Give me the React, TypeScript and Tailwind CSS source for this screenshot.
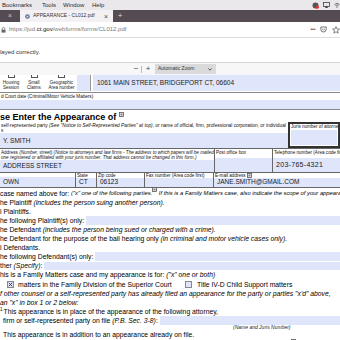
import React from "react";

const blue = "bg-[#dfe5fa]";

function TinyNote() {
  return (
    <svg width="5" height="5" viewBox="0 0 5 5" className="inline-block align-top">
      <rect x="0.5" y="0.5" width="4" height="4" fill="#fff" stroke="#555" strokeWidth="0.8" />
      <rect x="1.5" y="1.5" width="2" height="2" fill="#777" />
    </svg>
  );
}

function MenuBar() {
  return (
    <div className="flex h-[10px] items-center bg-[#ebe8eb] pl-[2px] text-[6px] text-[#2b2b2b]">
      <span className="w-[40px]">Bookmarks</span>
      <span className="w-[21px]">Tools</span>
      <span className="w-[29px]">Window</span>
      <span>Help</span>
      <div className="ml-auto flex items-center gap-[4px]">
        <svg width="7" height="7" viewBox="0 0 7 7">
          <circle cx="3.5" cy="3.5" r="3" fill="#555" />
          <circle cx="5.3" cy="5.2" r="1.6" fill="#e0322a" />
        </svg>
        <svg width="7" height="6" viewBox="0 0 7 6">
          <rect x="0.5" y="0.5" width="6" height="4" fill="none" stroke="#444" strokeWidth="0.8" />
          <path d="M2 6 L3.5 3.5 L5 6 Z" fill="#444" />
        </svg>
        <svg width="6" height="6" viewBox="0 0 6 6">
          <path d="M0.5 2.5 Q3 0 5.5 2.5 M1.5 3.6 Q3 2.2 4.5 3.6" fill="none" stroke="#555" strokeWidth="0.8" />
          <circle cx="3" cy="5" r="0.7" fill="#555" />
        </svg>
      </div>
    </div>
  );
}

function TabBar() {
  return (
    <div className="flex h-[12px] items-stretch bg-[#554c53] text-[7px]">
      <span className="flex w-[20px] items-center justify-center text-[#cfc8cd]">×</span>
      <div className="flex w-[93px] items-center bg-[#f3f1f3] pl-[5px] pr-[5px]">
        <svg width="5" height="5" viewBox="0 0 5 5">
          <circle cx="2.5" cy="2.5" r="2.3" fill="#5b6e95" />
          <circle cx="2.5" cy="2.5" r="1.1" fill="#c9d3e6" />
        </svg>
        <span className="ml-[3px] text-[5px] text-[#333]">APPEARANCE - CL012.pdf</span>
        <span className="ml-auto text-[7px] leading-none text-[#444]">×</span>
      </div>
      <span className="flex w-[14px] items-center justify-center text-[8px] text-[#ddd]">+</span>
    </div>
  );
}

function UrlBar() {
  return (
    <div className="flex h-[16px] items-center border-b border-[#dedede] bg-white text-[6px]">
      <svg width="5" height="6" viewBox="0 0 5 6" className="ml-[1px]">
        <path d="M1.2 2.6 V1.8 A1.3 1.3 0 0 1 3.8 1.8 V2.6" fill="none" stroke="#666" strokeWidth="0.7" />
        <rect x="0.5" y="2.6" width="4" height="3" fill="#666" />
      </svg>
      <span className="ml-[3px] text-[#7a7a7a]">
        https://jud.<span className="text-[#111]">ct.gov</span>/webforms/forms/CL012.pdf
      </span>
      <div className="ml-auto flex items-center gap-[5px]">
        <span className="text-[6px] tracking-[-0.5px] text-[#666]">•••</span>
        <svg width="7" height="7" viewBox="0 0 7 7">
          <path d="M0.8 1 H6.2 V3.3 A2.7 2.7 0 0 1 0.8 3.3 Z" fill="none" stroke="#555" strokeWidth="0.8" />
          <path d="M2 2.8 L3.5 4 L5 2.8" fill="none" stroke="#555" strokeWidth="0.7" />
        </svg>
        <svg width="8" height="8" viewBox="0 0 8 8">
          <path d="M4 0.6 L5 3 L7.5 3.1 L5.5 4.7 L6.2 7.2 L4 5.8 L1.8 7.2 L2.5 4.7 L0.5 3.1 L3 3 Z" fill="none" stroke="#555" strokeWidth="0.7" />
        </svg>
      </div>
    </div>
  );
}

function Notice() {
  return (
    <div className="h-[24px] bg-white pt-[11px] text-[6px] leading-[7px] text-[#333]">layed correctly.</div>
  );
}

function PdfToolbar() {
  return (
    <div className="flex h-[13px] items-center border-t border-[#d4d4d4] bg-[#f7f7f7] text-[#444]">
      <span className="ml-[133px] w-[6px] text-center text-[8px] leading-none">−</span>
      <span className="ml-[2px] h-[7px] w-px bg-[#bbb]" />
      <span className="ml-[3px] w-[6px] text-center text-[8px] leading-none">+</span>
      <div className="ml-[4px] flex h-[10px] w-[61px] items-center bg-[#dadada] pl-[3px] pr-[4px] text-[5px] text-[#333]">
        Automatic Zoom
        <svg width="4" height="3" viewBox="0 0 4 3" className="ml-auto">
          <path d="M0.5 0.5 L2 2.2 L3.5 0.5" fill="none" stroke="#333" strokeWidth="0.8" />
        </svg>
      </div>
    </div>
  );
}

function CourtBox({ w, a, b }: { w: string; a: string; b: string }) {
  return (
    <div className={`${w} flex flex-col items-center`}>
      <div className="h-[3px] w-[7px] border border-t-0 border-[#555]" />
      <div className="mt-[2px] text-center text-[4.5px] leading-[5px] text-[#222]">
        {a}
        <br />
        {b}
      </div>
    </div>
  );
}

function Label({ children, className = "" }: { children: React.ReactNode; className?: string }) {
  return (
    <div className={`overflow-hidden whitespace-nowrap pl-[1px] text-[4.6px] leading-[5px] text-[#111] ${className}`}>
      {children}
    </div>
  );
}

function Field({ children, className = "" }: { children?: React.ReactNode; className?: string }) {
  return (
    <div className={`${blue} flex items-center overflow-hidden whitespace-nowrap pl-[3px] text-[6.5px] text-[#1a1a1a] ${className}`}>
      {children}
    </div>
  );
}

function FormHeader() {
  return (
    <div>
      <div className="flex h-[18px] border-b border-[#888]">
        <div className="flex w-[77px]">
          <CourtBox w="w-[22px]" a="Housing" b="Session" />
          <CourtBox w="w-[24px]" a="Small" b="Claims" />
          <CourtBox w="w-[31px]" a="Geographic" b="Area number" />
        </div>
        <div className={`${blue} mb-[1px] w-[14px] border-r border-[#999]`} />
        <Field className="mb-[1px] ml-[2px] flex-1 pl-[4px]">1061 MAIN STREET, BRIDGEPORT CT, 06604</Field>
      </div>
      <div className="h-[17px] border-b border-[#888]">
        <Label className="pt-[1px]">d Court date (Criminal/Motor Vehicle Matters)</Label>
        <Field className="mt-[1px] h-[9px]" />
      </div>
      <div className="h-[12px] pt-[2px] text-[9px] font-bold leading-[10px]">
        se Enter the Appearance of <TinyNote />
      </div>
      <div className="flex h-[26px]">
        <div className="flex min-w-0 flex-1 flex-col">
          <Label className="pt-[1px] text-[4.8px]">
            self-represented party <i>(See "Notice to Self-Represented Parties" at top)</i>, or name of official, firm, professional corporation, or individual
          </Label>
          <Label>s</Label>
          <Field className="h-[15px]">Y. SMITH</Field>
        </div>
        <div className="flex w-[52px] flex-col border-2 border-[#333]">
          <Label>Juris number of attorney</Label>
          <div className={`${blue} m-[1px] flex-1`} />
        </div>
      </div>
      <div className="flex h-[25px] border-b border-t border-[#666]">
        <div className="flex w-[215px] flex-col border-r border-[#666]">
          <Label className="pt-[1px]">
            Address <i>(Number, street) (Notice to attorneys and law firms - The address to which papers will be mailed from the court</i>
          </Label>
          <Label>
            <i>one registered or affiliated with your juris number. That address cannot be changed in this form.)</i>
          </Label>
          <Field className="mt-auto h-[12px]">ADDRESS STREET</Field>
        </div>
        <div className="flex w-[58px] flex-col border-r border-[#666]">
          <Label className="pt-[1px]">Post office box</Label>
          <Field className="mt-auto h-[14px]" />
        </div>
        <div className="flex min-w-0 flex-1 flex-col">
          <Label className="pt-[1px]">Telephone number (Area code first)</Label>
          <Field className="mt-auto h-[14px] text-[7px] tracking-[0.3px]">203-765-4321</Field>
        </div>
      </div>
      <div className="flex h-[15px] border-b border-[#666]">
        <div className="flex w-[76px] flex-col border-r border-[#666]">
          <Label> </Label>
          <Field className="mt-auto h-[10px]">OWN</Field>
        </div>
        <div className="flex w-[21px] flex-col border-r border-[#666]">
          <Label>State</Label>
          <Field className="mt-auto h-[10px]">CT</Field>
        </div>
        <div className="flex w-[48px] flex-col border-r border-[#666]">
          <Label>Zip code</Label>
          <Field className="mt-auto h-[10px]">06123</Field>
        </div>
        <div className="flex w-[69px] flex-col border-r border-[#666]">
          <Label>Fax number (Area code first)</Label>
          <Field className="mt-auto h-[10px]" />
        </div>
        <div className="flex min-w-0 flex-1 flex-col">
          <Label>
            E-mail address <TinyNote />
          </Label>
          <Field className="mt-auto h-[10px]">JANE.SMITH@GMAIL.COM</Field>
        </div>
      </div>
    </div>
  );
}

function Line({ children, className = "" }: { children: React.ReactNode; className?: string }) {
  return (
    <div className={`flex h-[9px] items-center whitespace-nowrap text-[6.8px] leading-[9px] text-black ${className}`}>
      {children}
    </div>
  );
}

function Box({ checked }: { checked?: boolean }) {
  return (
    <span className={`${blue} flex h-[7px] w-[7px] items-center justify-center border border-[#888]`}>
      {checked && (
        <svg width="5" height="5" viewBox="0 0 5 5">
          <path d="M0.8 0.8 L4.2 4.2 M4.2 0.8 L0.8 4.2" stroke="#333" strokeWidth="0.9" />
        </svg>
      )}
    </span>
  );
}

function Parties() {
  return (
    <div className="pt-[1px]">
      <Line>
        case named above for:&nbsp;
        <i className="text-[5.8px]">("x" one of the following parties.</i>
        <span className="-mt-[4px]">
          <TinyNote />
        </span>
        <i className="text-[5.8px]">&nbsp;If this is a Family Matters case, also indicate the scope of your appearance)</i>
      </Line>
      <Line>
        he Plaintiff&nbsp;<i>(includes the person suing another person).</i>
      </Line>
      <Line>l Plaintiffs.</Line>
      <Line>
        he following Plaintiff(s) only:
        <span className={`${blue} ml-[2px] h-[9px] flex-1`} />
      </Line>
      <Line>
        he Defendant&nbsp;<i>(includes the person being sued or charged with a crime).</i>
      </Line>
      <Line>
        he Defendant for the purpose of the bail hearing only&nbsp;<i>(in criminal and motor vehicle cases only).</i>
      </Line>
      <Line>l Defendants.</Line>
      <Line>
        he following Defendant(s) only:
        <span className={`${blue} ml-[2px] h-[9px] flex-1`} />
      </Line>
      <Line>
        ther&nbsp;<i>(Specify)</i>:
        <span className={`${blue} ml-[2px] h-[8px] flex-1`} />
      </Line>
      <Line>
        his is a Family Matters case and my appearance is for:&nbsp;<i>("x" one or both)</i>
      </Line>
      <Line className="h-[10px]">
        <span className="ml-[7px]">
          <Box checked />
        </span>
        <span className="ml-[4px] w-[167px]">matters in the Family Division of the Superior Court</span>
        <Box />
        <span className="ml-[5px]">Title IV-D Child Support matters</span>
      </Line>
      <Line>
        <i>f other counsel or a self-represented party has already filed an appearance for the party or parties "x'd" above,</i>
      </Line>
      <Line className="h-[8px]">
        <i>an "x" in box 1 or 2 below:</i>
      </Line>
      <Line className="items-end">
        <span className="self-start text-[4.5px] leading-[5px]">1</span>
        <span className="ml-[1px]">This appearance is in place of the appearance of the following attorney,</span>
      </Line>
      <Line>
        <span className="ml-[3px]">firm or self-represented party on file&nbsp;</span>
        <i>(P.B. Sec. 3-8)</i>:
        <span className={`${blue} ml-[2px] h-[9px] flex-1`} />
      </Line>
      <div className="h-[5px] pl-[233px] text-[5px] leading-[5px] text-[#222]">
        <i>(Name and Juris Number)</i>
      </div>
      <Line>
        <span className="ml-[3px]">This appearance is in addition to an appearance already on file.</span>
      </Line>
      <div className="pl-[291px]">
        <TinyNote />
      </div>
    </div>
  );
}

export default function App() {
  return (
    <div className="h-[340px] w-[340px] overflow-hidden bg-white font-['Liberation_Sans',Arial,sans-serif] text-black">
      <MenuBar />
      <TabBar />
      <UrlBar />
      <Notice />
      <PdfToolbar />
      <div className="bg-white">
        <FormHeader />
        <Parties />
      </div>
    </div>
  );
}
